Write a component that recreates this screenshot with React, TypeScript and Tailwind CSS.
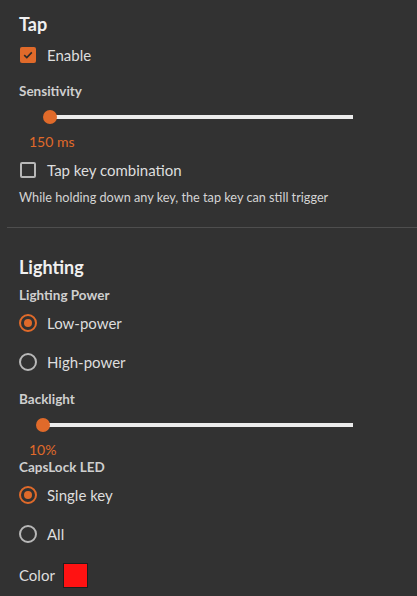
import React from "react";

const ORANGE = "#e06a2a";

function Checkbox({ checked }: { checked: boolean }) {
  return checked ? (
    <div className="w-[16px] h-[16px] rounded-[2px] bg-[#e06a2a] flex items-center justify-center">
      <svg width="12" height="12" viewBox="0 0 12 12">
        <path d="M2.2 6.2 L4.8 8.6 L9.8 3.4" fill="none" stroke="#2a2a2a" strokeWidth="1.6" />
      </svg>
    </div>
  ) : (
    <div className="w-[16px] h-[16px] rounded-[2px] border-2 border-[#b8b8b8]" />
  );
}

function Radio({ checked }: { checked: boolean }) {
  return checked ? (
    <div className="w-[18px] h-[18px] rounded-full border-2 border-[#e06a2a] flex items-center justify-center">
      <div className="w-[8px] h-[8px] rounded-full bg-[#e06a2a]" />
    </div>
  ) : (
    <div className="w-[18px] h-[18px] rounded-full border-2 border-[#b8b8b8]" />
  );
}

function Slider({ thumbX }: { thumbX: number }) {
  return (
    <div className="relative h-[14px] w-[334px]">
      <div
        className="absolute top-[5px] right-0 h-[4px] bg-[#ececec]"
        style={{ left: thumbX }}
      />
      <div
        className="absolute top-0 w-[14px] h-[14px] rounded-full bg-[#e06a2a]"
        style={{ left: thumbX - 7 }}
      />
    </div>
  );
}

export default function App() {
  return (
    <div
      className="w-[417px] h-[596px] bg-[#323232] overflow-hidden flex flex-col text-[#dedede]"
      style={{ fontFamily: "Lato, 'Open Sans', sans-serif" }}
    >
      <div className="pl-[19px] flex flex-col">
        <div className="mt-[12px] h-[24px] flex items-center text-[18px] font-bold text-[#f0f0f0]">Tap</div>
        <div className="mt-[7px] h-[24px] flex items-center gap-[11px]">
          <div className="ml-[1px]"><Checkbox checked /></div>
          <span className="text-[15px]">Enable</span>
        </div>
        <div className="mt-[15px] h-[18px] flex items-center text-[13.5px] font-bold text-[#cfcfcf]">Sensitivity</div>
        <div className="mt-[10px]"><Slider thumbX={31} /></div>
        <div className="mt-[7px] h-[20px] flex items-center pl-[10px] text-[14px]" style={{ color: ORANGE }}>150 ms</div>
        <div className="mt-[7px] h-[24px] flex items-center gap-[11px]">
          <div className="ml-[1px]"><Checkbox checked={false} /></div>
          <span className="text-[15px]">Tap key combination</span>
        </div>
        <div className="mt-[7px] h-[18px] flex items-center text-[12.7px] text-[#d4d4d4]">
          While holding down any key, the tap key can still trigger
        </div>
      </div>
      <div className="mt-[20px] ml-[7px] h-[1px] bg-[#4e4e4e]" />
      <div className="pl-[19px] flex flex-col">
        <div className="mt-[27px] h-[24px] flex items-center text-[18px] font-bold text-[#f0f0f0]">Lighting</div>
        <div className="mt-[7px] h-[18px] flex items-center text-[13.5px] font-bold text-[#cfcfcf]">Lighting Power</div>
        <div className="mt-[7px] h-[24px] flex items-center gap-[10px]">
          <Radio checked />
          <span className="text-[15px]">Low-power</span>
        </div>
        <div className="mt-[15px] h-[24px] flex items-center gap-[10px]">
          <Radio checked={false} />
          <span className="text-[15px]">High-power</span>
        </div>
        <div className="mt-[16px] h-[18px] flex items-center text-[13.5px] font-bold text-[#cfcfcf]">Backlight</div>
        <div className="mt-[10px]"><Slider thumbX={24} /></div>
        <div className="mt-[9px] h-[16px] flex items-center pl-[10px] text-[14px]" style={{ color: ORANGE }}>10%</div>
        <div className="mt-[1px] h-[18px] flex items-center text-[13.5px] font-bold text-[#cfcfcf]">CapsLock LED</div>
        <div className="mt-[7px] h-[24px] flex items-center gap-[10px]">
          <Radio checked />
          <span className="text-[15px]">Single key</span>
        </div>
        <div className="mt-[15px] h-[24px] flex items-center gap-[10px]">
          <Radio checked={false} />
          <span className="text-[15px]">All</span>
        </div>
        <div className="mt-[16px] h-[26px] flex items-center gap-[8px]">
          <span className="text-[15px]">Color</span>
          <div className="w-[25px] h-[25px] bg-[#ff1212] border border-[#1e1e1e]" />
        </div>
      </div>
    </div>
  );
}
